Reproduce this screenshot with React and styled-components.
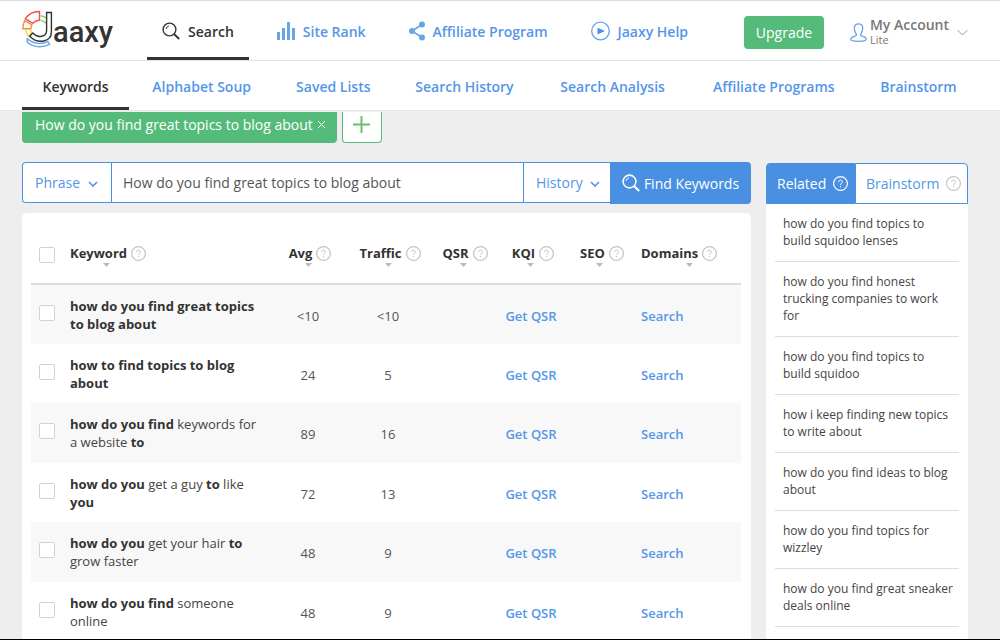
import React from "react";
import styled, { createGlobalStyle, css } from "styled-components";

const blue = "#4a90e2";
const linkBlue = "#5496e8";
const iconBlue = "#68a4ea";
const green = "#55bb7a";
const ink = "#333";

const Global = createGlobalStyle`
  *, *::before, *::after { box-sizing: border-box; }
  body { margin: 0; background: #eee; color: ${ink}; font-family: "Open Sans", "Noto Sans", sans-serif; font-size: 13px; }
  button, input, select { font: inherit; color: inherit; margin: 0; }
  a { text-decoration: none; color: ${linkBlue}; }
`;

const Page = styled.div`
  height: 100vh;
  display: flex;
  flex-direction: column;
  overflow: hidden;
  border-top: 1px solid #ddd;
  border-bottom: 1px solid #000;
`;

const TopBar = styled.header`
  display: flex;
  flex: none;
  height: 60px;
  padding: 0 32px 0 22px;
  background: #fff;
  border-bottom: 1px solid #e4e4e4;
`;

const Logo = styled.a`
  display: flex;
  align-items: flex-start;
  width: 93px;
  margin-right: 32px;
  padding-top: 9px;
  color: ${ink};
  svg { flex: none; }
`;

const LogoText = styled.span`
  margin-top: 5px;
  font: 500 29px/34px Roboto, sans-serif;
`;

const MainNav = styled.nav`
  display: flex;
  gap: 13px;
`;

const navItem = css`
  display: flex;
  align-items: center;
  padding-top: 4px;
  font-size: 14px;
  font-weight: 600;
  white-space: nowrap;
  border-bottom: 3px solid transparent;
  ${(p) => p.$active && css`color: ${ink}; border-color: ${ink};`}
`;

const NavLink = styled.a`
  ${navItem}
  gap: 8px;
  height: 59px;
  padding-left: 15px;
  padding-right: 15px;
`;

const Account = styled.div`
  display: flex;
  align-items: center;
  margin-left: auto;
  padding-top: 3px;
`;

const Upgrade = styled.button`
  width: 80px;
  height: 33px;
  margin-right: 26px;
  padding: 0;
  border: 0;
  border-radius: 4px;
  background: ${green};
  color: #fff;
  font-size: 14px;
`;

const AccountMenu = styled.button`
  display: flex;
  align-items: center;
  padding: 0;
  border: 0;
  background: none;
  color: #777;
  text-align: left;
  svg { flex: none; }
`;

const AccountName = styled.span`
  display: block;
  margin: 0 8px 0 3px;
  font-size: 14px;
  line-height: 16px;
  font-weight: 600;
  small { display: block; font-size: 11px; line-height: 14px; font-weight: 400; }
`;

const SubNav = styled.nav`
  display: grid;
  grid-template-columns: 107fr 145fr 118fr 144fr 152fr 170fr 119fr;
  flex: none;
  height: 50px;
  padding: 0 22px;
  background: #fff;
  border-bottom: 1px solid #e6e6e6;
`;

const SubLink = styled.a`
  ${navItem}
  justify-content: center;
`;

const Tags = styled.div`
  display: flex;
  flex: none;
  gap: 5px;
  padding: 1px 22px 19px;
`;

const Tag = styled.div`
  display: flex;
  align-items: center;
  gap: 4px;
  height: 31px;
  padding: 0 11px 6px 13px;
  border-radius: 0 0 4px 4px;
  background: ${green};
  color: #fff;
  font-size: 14px;
`;

const TagClose = styled.button`
  display: flex;
  padding: 0;
  border: 0;
  background: none;
`;

const AddTag = styled.button`
  display: flex;
  justify-content: center;
  width: 40px;
  height: 31px;
  padding: 4px 0 0;
  border: 1px solid ${green};
  border-top: 0;
  border-radius: 0 0 4px 4px;
  background: #fff;
`;

const Content = styled.main`
  display: flex;
  flex: 1;
  gap: 15px;
  min-height: 0;
  padding: 0 32px 0 22px;
`;

const Results = styled.section`
  display: flex;
  flex: 1;
  flex-direction: column;
  min-width: 0;
`;

const SearchForm = styled.form`
  display: flex;
  height: 42px;
  margin-bottom: 9px;
  font-size: 14px;
`;

const SelectBox = styled.label`
  display: grid;
  align-items: center;
  flex: none;
  width: ${(p) => p.$width};
  height: 41px;
  border: 1px solid ${blue};
  border-right: 0;
  border-radius: ${(p) => (p.$first ? "4px 0 0 4px" : "0")};
  background: #fff;
  color: ${linkBlue};
  select, svg { grid-area: 1 / 1; }
  svg { justify-self: end; margin: 3px ${(p) => (p.$first ? "13px" : "10px")} 0 0; pointer-events: none; }
`;

const Select = styled.select`
  appearance: none;
  width: 100%;
  height: 39px;
  padding: 0 0 0 12px;
  border: 0;
  background: none;
`;

const Query = styled.input`
  flex: 1;
  min-width: 0;
  height: 41px;
  padding: 0 11px;
  border: 1px solid ${blue};
  border-right: 0;
  border-radius: 0;
  background: #fff;
  color: #555;
`;

const Find = styled.button`
  display: flex;
  align-items: center;
  justify-content: center;
  gap: 4px;
  width: 141px;
  padding: 0;
  border: 0;
  border-radius: 0 4px 4px 0;
  background: ${blue};
  color: #fff;
  white-space: nowrap;
`;

const Card = styled.div`
  flex: 1;
  min-height: 0;
  padding: 0 10px 0 9px;
  border-radius: 5px 5px 0 0;
  background: #fff;
`;

const Table = styled.table`
  width: 100%;
  table-layout: fixed;
  border-collapse: collapse;
`;

const Head = styled.th`
  height: 71px;
  width: ${(p) => p.$width || "auto"};
  padding: 15px 0 0 ${(p) => (p.$left ? (p.$indent ? "5px" : "0") : "4px")};
  border-bottom: 2px solid #ddd;
  text-align: ${(p) => (p.$left ? "left" : "center")};
`;

const Sort = styled.button`
  display: inline-grid;
  justify-items: ${(p) => (p.$fill ? "start" : "center")};
  width: ${(p) => (p.$fill ? "100%" : "auto")};
  padding: 0;
  border: 0;
  background: none;
  font-weight: 700;
  vertical-align: middle;
`;

const SortArrow = styled.svg`
  justify-self: center;
  margin: 1px 4px 0 0;
`;

const SortLabel = styled.span`
  display: flex;
  align-items: center;
  gap: 4px;
  line-height: 18px;
`;

const Row = styled.tr`
  height: 59px;
  &:nth-child(odd) { height: 60px; background: #f8f8f8; }
`;

const Cell = styled.td`
  padding: ${(p) => (p.$indent ? "2px 0 0 5px" : "2px 0 0")};
  text-align: ${(p) => (p.$left ? "left" : "center")};
  color: #555;
  a { font-weight: 600; }
`;

const Phrase = styled.td`
  padding: 0 8px 0 0;
  line-height: 18px;
  color: #444;
  b { color: ${ink}; }
`;

const CheckCell = styled.td`
  padding: 0 0 4px 8px;
  line-height: 0;
`;

const CheckHead = styled.th`
  width: 39px;
  padding: 14px 0 0 8px;
  border-bottom: 2px solid #ddd;
  text-align: left;
  line-height: 0;
`;

const Check = styled.input.attrs({ type: "checkbox" })`
  appearance: none;
  width: 16px;
  height: 16px;
  border: 1px solid #d2d2d2;
  border-radius: 2px;
  background: #fff;
  vertical-align: middle;
`;

const Side = styled.aside`
  display: flex;
  flex: none;
  flex-direction: column;
  width: 202px;
  padding-top: 1px;
`;

const Tabs = styled.div`
  display: flex;
  flex: none;
  height: 41px;
`;

const Tab = styled.button`
  display: flex;
  align-items: center;
  justify-content: space-between;
  flex: ${(p) => (p.$active ? "0 0 89px" : "1")};
  padding: 0 6px 0 10px;
  border: 1px solid ${blue};
  border-radius: ${(p) => (p.$active ? "4px 0 0 0" : "0 4px 0 0")};
  background: ${(p) => (p.$active ? blue : "#fff")};
  color: ${(p) => (p.$active ? "#fff" : linkBlue)};
  font-size: 14px;
`;

const Related = styled.ul`
  flex: 1;
  min-height: 0;
  margin: 0;
  padding: 0 9px;
  list-style: none;
  background: #fff;
`;

const RelatedItem = styled.li`
  padding: 11px 4px 12px 8px;
  border-bottom: 1px solid #ddd;
  font-size: 12px;
  line-height: 17px;
  a { color: #444; }
`;

const HelpIcon = ({ color = "#c4c4c4" }) => (
  <svg width="15" height="15" viewBox="0 0 15 15" fill="none" stroke={color}>
    <circle cx="7.5" cy="7.5" r="6.9" strokeWidth="1.2" />
    <path d="M5.6 6c0-2.6 4-2.4 3.8 0-.1 1.300-1.900 1.400-1.900 3" />
    <path d="M7.500 10v1.200" />
  </svg>
);

const Chevron = () => (
  <svg width="10" height="7" viewBox="0 0 10 7" fill="none" stroke={linkBlue} strokeWidth="1.700">
    <path d="M1 1l4 4 4-4" />
  </svg>
);

const Magnifier = ({ width = 1.4 }) => (
  <svg width="18" height="18" viewBox="0 0 18 18" fill="none" stroke="currentColor" strokeWidth={width}>
    <circle cx="7.500" cy="7.500" r="6.400" />
    <path d="M12 12l5.200 5" strokeWidth={width + 0.5} />
    <path d="M4.200 7c.1-1.600 1.100-2.700 2.700-2.900" strokeWidth="1" />
  </svg>
);

const LogoMark = () => (
  <svg width="31" height="38" viewBox="0 0 31 38" fill="none" strokeWidth="1.400">
    <path stroke="#f0544f" d="M17.500 1.500v8.700c-2.700.1-4.900 1.100-6.700 3.100L3.300 8.700C6.500 4 11.500 1.300 17.500 1.500z" />
    <path stroke="#f58a3c" d="M2.600 10.700l7.400 4.200c-.8 1.300-1.100 2.400-1.200 3.900H.9c0-3 .6-5.700 1.700-8.100z" />
    <path stroke="#f7d33c" d="M3.700 19.500c.2 2.600 1 4.700 2.600 6.700l3.300-2.900c-.7-1.200-1-2.400-1-3.800" />
    <path stroke="#7fd04c" d="M18.500 5.800c2 .2 3.800.9 5.300 2M18.500 10.400c2.200.3 4 1.300 5.300 2.900" />
    <path stroke="#6aa6ea" d="M5.200 28.800c6 5.200 14.300 6.200 20.600 2.600l1.700 2.900c-7 3.700-16.800 3.200-22.300-2.400z" />
    <path stroke={ink} d="M24.600 2.500h4.800v19.500c0 10-13.500 12.600-21.700 4.200l3-3.200c5.500 5.800 13.900 3.800 13.900-2.500z" />
  </svg>
);

const BarsIcon = () => (
  <svg width="18" height="18" viewBox="0 0 18 18" fill={iconBlue}>
    <path d="M0 10h3v8H0zM5 6h3v12H5zM10 0h3v18h-3zM15 6h3v12h-3z" />
  </svg>
);

const ShareIcon = () => (
  <svg width="16" height="20" viewBox="0 0 16 20" fill={iconBlue}>
    <path d="M13 3.500L3 10l10 6.500" fill="none" stroke={iconBlue} strokeWidth="1.600" />
    <circle cx="13" cy="3.500" r="3" />
    <circle cx="3" cy="10" r="3" />
    <circle cx="13" cy="16.500" r="3" />
  </svg>
);

const PlayIcon = () => (
  <svg width="19" height="20" viewBox="0 0 19 20" fill="none" stroke={iconBlue}>
    <circle cx="9.500" cy="10" r="8.800" strokeWidth="1.300" />
    <path d="M6.500 6.700v6.800l7.500-3.400z" fill={blue} stroke="none" />
  </svg>
);

const UserIcon = () => (
  <svg width="17" height="19" viewBox="0 0 17 19" fill="none" stroke={iconBlue} strokeWidth="1.300">
    <path d="M6.400 11.300C4.900 9.300 4.300 7.500 4.300 5.300 4.300 2.500 6 .9 8.500.9s4.200 1.600 4.200 4.400c0 2.200-.6 4-2.100 6-.3 1.300.5 1.600 2.200 2 2.200.5 3.500 1.300 3.500 3.200 0 1.300-3 1.800-7.800 1.800S.7 17.800.7 16.500c0-1.900 1.300-2.700 3.500-3.200 1.700-.4 2.500-.7 2.200-2z" />
  </svg>
);

const columns = [
  { label: "Avg", width: "80px" },
  { label: "Traffic", width: "80px" },
  { label: "QSR", width: "70px" },
  { label: "KQI", width: "66px" },
  { label: "SEO", width: "72px" },
  { label: "Domains", width: "105px", left: true },
];

const rows = [
  { id: 1, phrase: <b>how do you find great topics to blog about</b>, avg: "<10", traffic: "<10" },
  { id: 2, phrase: <b>how to find topics to blog about</b>, avg: "24", traffic: "5" },
  { id: 3, phrase: <><b>how do you find</b> keywords for a website <b>to</b></>, avg: "89", traffic: "16" },
  { id: 4, phrase: <><b>how do you</b> get a guy <b>to</b> like <b>you</b></>, avg: "72", traffic: "13" },
  { id: 5, phrase: <><b>how do you</b> get your hair <b>to</b> grow faster</>, avg: "48", traffic: "9" },
  { id: 6, phrase: <><b>how do you find</b> someone online</>, avg: "48", traffic: "9" },
];

const related = [
  "how do you find topics to build squidoo lenses",
  "how do you find honest trucking companies to work for",
  "how do you find topics to build squidoo",
  "how i keep finding new topics to write about",
  "how do you find ideas to blog about",
  "how do you find topics for wizzley",
  "how do you find great sneaker deals online",
];

const subLinks = ["Keywords", "Alphabet Soup", "Saved Lists", "Search History", "Search Analysis", "Affiliate Programs", "Brainstorm"];

const SortHeader = ({ label, fill }) => (
  <Sort type="button" $fill={fill}>
    <SortLabel>{label} <HelpIcon /></SortLabel>
    <SortArrow width="7" height="4" viewBox="0 0 7 4" fill="#bbb"><path d="M0 0h7L3.500 4z" /></SortArrow>
  </Sort>
);

export default function App() {
  return (
    <Page>
      <Global />
      <TopBar>
        <Logo href="#" aria-label="Jaaxy"><LogoMark /><LogoText>aaxy</LogoText></Logo>
        <MainNav>
          <NavLink href="#" $active><Magnifier />Search</NavLink>
          <NavLink href="#"><BarsIcon />Site Rank</NavLink>
          <NavLink href="#"><ShareIcon />Affiliate Program</NavLink>
          <NavLink href="#"><PlayIcon />Jaaxy Help</NavLink>
        </MainNav>
        <Account>
          <Upgrade type="button">Upgrade</Upgrade>
          <AccountMenu type="button">
            <UserIcon />
            <AccountName>My Account<small>Lite</small></AccountName>
            <svg width="11" height="7" viewBox="0 0 11 7" fill="none" stroke="#999"><path d="M.5 1l5 5 5-5" /></svg>
          </AccountMenu>
        </Account>
      </TopBar>
      <SubNav>
        {subLinks.map((s, i) => <SubLink key={s} href="#" $active={i === 0}>{s}</SubLink>)}
      </SubNav>
      <Tags>
        <Tag>
          How do you find great topics to blog about
          <TagClose type="button" aria-label="Remove">
            <svg width="9" height="9" viewBox="0 0 9 9" stroke="#fff"><path d="M1 1l7 7M8 1L1 8" /></svg>
          </TagClose>
        </Tag>
        <AddTag type="button" aria-label="Add">
          <svg width="17" height="17" viewBox="0 0 17 17" stroke="#6cc067" strokeWidth="2"><path d="M8.500 0v17M0 8.500h17" /></svg>
        </AddTag>
      </Tags>
      <Content>
        <Results>
          <SearchForm>
            <SelectBox $width="89px" $first>
              <Select aria-label="Match type"><option>Phrase</option></Select>
              <Chevron />
            </SelectBox>
            <Query aria-label="Keyword" defaultValue="How do you find great topics to blog about" />
            <SelectBox $width="87px">
              <Select aria-label="History"><option>History</option></Select>
              <Chevron />
            </SelectBox>
            <Find type="button"><Magnifier width={1.6} />Find Keywords</Find>
          </SearchForm>
          <Card>
            <Table>
              <thead>
                <tr>
                  <CheckHead><Check aria-label="Select all keywords" /></CheckHead>
                  <Head $left><SortHeader label="Keyword" /></Head>
                  {columns.map((c) => (
                    <Head key={c.label} $width={c.width} $left={c.left} $indent={c.left}>
                      <SortHeader label={c.label} fill={c.left} />
                    </Head>
                  ))}
                </tr>
              </thead>
              <tbody>
                {rows.map((r) => (
                  <Row key={r.id}>
                    <CheckCell><Check aria-label="Select keyword" /></CheckCell>
                    <Phrase>{r.phrase}</Phrase>
                    <Cell>{r.avg}</Cell>
                    <Cell>{r.traffic}</Cell>
                    <Cell />
                    <Cell><a href="#">Get QSR</a></Cell>
                    <Cell />
                    <Cell $left $indent><a href="#">Search</a></Cell>
                  </Row>
                ))}
              </tbody>
            </Table>
          </Card>
        </Results>
        <Side>
          <Tabs>
            <Tab type="button" $active>Related<HelpIcon color="#fff" /></Tab>
            <Tab type="button">Brainstorm<HelpIcon /></Tab>
          </Tabs>
          <Related>
            {related.map((r) => <RelatedItem key={r}><a href="#">{r}</a></RelatedItem>)}
          </Related>
        </Side>
      </Content>
    </Page>
  );
}
